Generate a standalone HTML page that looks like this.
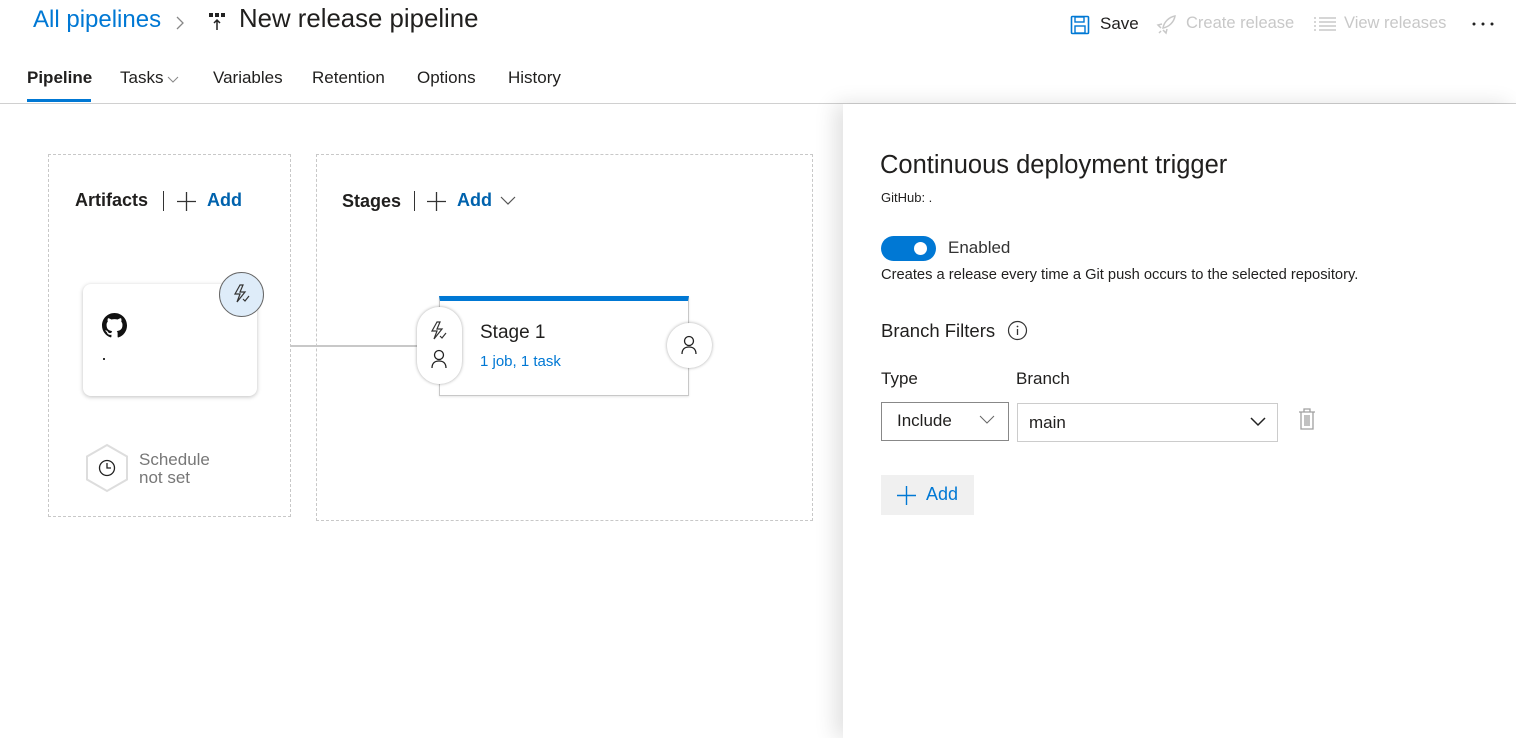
<!DOCTYPE html>
<html><head><style>
*{box-sizing:border-box;margin:0;padding:0}
body{width:1516px;height:738px;overflow:hidden;background:#fff;font-family:"Segoe UI","Liberation Sans",sans-serif;color:#201f1e;position:relative}
.a{position:absolute}
.t{white-space:nowrap}
</style></head><body>
<div class="a t" style="left:33px;top:6px;font-size:24px;color:#0078d4;font-weight:300">All pipelines</div>
<svg class="a" style="left:175px;top:15px" width="10" height="16"><path d="M2 2l6 6-6 6" fill="none" stroke="#888" stroke-width="1.3"/></svg>
<svg class="a" style="left:208px;top:12px" width="20" height="20" viewBox="0 0 20 20"><rect x="1" y="1" width="4" height="4" fill="#222"/><rect x="7" y="1" width="4" height="4" fill="#222"/><rect x="13" y="1" width="4" height="4" fill="#222"/><path d="M9 18V8M6 11l3-3 3 3" stroke="#222" stroke-width="1.5" fill="none"/></svg>
<div class="a t" style="left:239px;top:5px;font-size:25.8px;color:#201f1e">New release pipeline</div>

<svg class="a" style="left:1070px;top:15px" width="20" height="20" viewBox="0 0 20 20"><rect x="1.5" y="1.5" width="17" height="17" rx="1" fill="none" stroke="#0078d4" stroke-width="1.6"/><rect x="5" y="2" width="9" height="5" fill="none" stroke="#0078d4" stroke-width="1.4"/><rect x="5" y="11" width="10" height="7" fill="none" stroke="#0078d4" stroke-width="1.4"/></svg>
<div class="a t" style="left:1100px;top:14px;font-size:17px">Save</div>
<svg class="a" style="left:1155px;top:14px" width="22" height="22" viewBox="0 0 22 22"><path d="M8 14C9 8 14 3 20 2c-1 6-6 11-12 12zM7 10l-4 1 3 3M12 15l-1 4-3-3M4 19l2-2" stroke="#c8c8c8" stroke-width="1.5" fill="none"/></svg>
<div class="a t" style="left:1186px;top:14px;font-size:16.5px;color:#c8c8c8">Create release</div>
<svg class="a" style="left:1314px;top:16px" width="22" height="16"><path d="M0 2h2M5 2h17M0 6h2M5 6h17M0 10h2M5 10h17M0 14h2M5 14h17" stroke="#c8c8c8" stroke-width="1.5"/></svg>
<div class="a t" style="left:1344px;top:14px;font-size:16.5px;color:#c8c8c8">View releases</div>
<svg class="a" style="left:1472px;top:22px" width="24" height="4"><circle cx="2" cy="2" r="1.5" fill="#222"/><circle cx="11" cy="2" r="1.5" fill="#222"/><circle cx="20" cy="2" r="1.5" fill="#222"/></svg>

<div class="a t" style="left:27px;top:68px;font-size:17px;font-weight:600">Pipeline</div>
<div class="a" style="left:27px;top:99px;width:64px;height:3px;background:#0078d4"></div>
<div class="a t" style="left:120px;top:68px;font-size:17px">Tasks</div>
<svg class="a" style="left:167px;top:76px" width="12" height="7"><path d="M1 1l5 5 5-5" fill="none" stroke="#888" stroke-width="1"/></svg>
<div class="a t" style="left:213px;top:68px;font-size:17px">Variables</div>
<div class="a t" style="left:312px;top:68px;font-size:17px">Retention</div>
<div class="a t" style="left:417px;top:68px;font-size:17px">Options</div>
<div class="a t" style="left:508px;top:68px;font-size:17px">History</div>
<div class="a" style="left:0;top:103px;width:1516px;height:1px;background:#d0d0d0"></div>

<div class="a" style="left:48px;top:154px;width:243px;height:363px;border:1px dashed #c8c8c8"></div>
<div class="a" style="left:316px;top:154px;width:497px;height:367px;border:1px dashed #c8c8c8"></div>
<div class="a t" style="left:75px;top:190px;font-size:18px;font-weight:600">Artifacts</div>
<div class="a" style="left:163px;top:191px;width:1px;height:20px;background:#333"></div>
<svg class="a" style="left:177px;top:192px" width="19" height="19"><path d="M9.5 0v19M0 9.5h19" stroke="#333" stroke-width="1.3"/></svg>
<div class="a t" style="left:207px;top:190px;font-size:18px;font-weight:600;color:#0062ad">Add</div>
<div class="a t" style="left:342px;top:191px;font-size:18px;font-weight:600">Stages</div>
<div class="a" style="left:414px;top:191px;width:1px;height:20px;background:#333"></div>
<svg class="a" style="left:427px;top:192px" width="19" height="19"><path d="M9.5 0v19M0 9.5h19" stroke="#333" stroke-width="1.3"/></svg>
<div class="a t" style="left:457px;top:190px;font-size:18px;font-weight:600;color:#0062ad">Add</div>
<svg class="a" style="left:500px;top:196px" width="16" height="9"><path d="M1 1l7 7 7-7" fill="none" stroke="#555" stroke-width="1.2"/></svg>

<div class="a" style="left:83px;top:284px;width:174px;height:112px;border-radius:8px;background:#fff;box-shadow:0 1px 4px rgba(0,0,0,.25)"></div>
<svg class="a" style="left:102px;top:313px" width="25" height="25" viewBox="0 0 16 16"><path fill="#111" d="M8 0C3.58 0 0 3.58 0 8c0 3.54 2.290 6.53 5.47 7.59.4.07.55-.17.55-.38v-1.330c-2.23.48-2.7-1.070-2.7-1.070-.36-.92-.89-1.170-.89-1.170-.73-.5.06-.49.06-.49.8.06 1.230.83 1.230.83.71 1.230 1.870.87 2.330.66.07-.52.28-.87.5-1.070-1.780-.2-3.640-.89-3.640-3.950 0-.87.31-1.590.82-2.150-.08-.2-.36-1.020.08-2.120 0 0 .67-.21 2.2.82a7.6 7.6 0 014 0c1.530-1.040 2.2-.82 2.2-.82.44 1.1.16 1.920.08 2.120.51.56.82 1.270.82 2.150 0 3.070-1.870 3.750-3.650 3.950.29.25.54.73.54 1.480v2.2c0 .21.15.46.55.38A8.010 8.010 0 0016 8c0-4.420-3.580-8-8-8z"/></svg>
<div class="a" style="left:103px;top:358px;width:2px;height:2px;background:#333"></div>
<div class="a" style="left:219px;top:272px;width:45px;height:45px;border-radius:50%;background:#deecf9;border:1px solid #666"></div>
<svg class="a" style="left:231px;top:283px" width="22" height="22" viewBox="0 0 22 22"><path d="M9 2L4 11h5l-3 8 8-10h-5l3-7z" fill="none" stroke="#333" stroke-width="1.2"/><path d="M12 16l2 2 4-5" fill="none" stroke="#333" stroke-width="1.2"/></svg>

<div class="a" style="left:291px;top:345px;width:130px;height:2px;background:#c8c8c8"></div>

<div class="a" style="left:439px;top:296px;width:250px;height:100px;background:#fff;border:1px solid #c8c8c8;border-top:5px solid #0078d4;box-shadow:0 1px 2px rgba(0,0,0,.1)"></div>
<div class="a" style="left:417px;top:307px;width:45px;height:77px;border-radius:23px;background:#fff;box-shadow:0 0 3px rgba(0,0,0,.35)"></div>
<svg class="a" style="left:428px;top:320px" width="22" height="22" viewBox="0 0 22 22"><path d="M9 2L4 11h5l-3 8 8-10h-5l3-7z" fill="none" stroke="#333" stroke-width="1.2"/><path d="M12 16l2 2 4-5" fill="none" stroke="#333" stroke-width="1.2"/></svg>
<svg class="a" style="left:430px;top:349px" width="18" height="20" viewBox="0 0 18 20"><circle cx="9" cy="6" r="4.5" fill="none" stroke="#222" stroke-width="1.3"/><path d="M2 19c0-5 3-7 7-7s7 2 7 7" fill="none" stroke="#222" stroke-width="1.3"/></svg>
<div class="a t" style="left:480px;top:322px;font-size:19px">Stage 1</div>
<div class="a t" style="left:480px;top:353px;font-size:15px;color:#0078d4">1 job, 1 task</div>
<div class="a" style="left:667px;top:323px;width:45px;height:45px;border-radius:50%;background:#fff;box-shadow:0 0 3px rgba(0,0,0,.35)"></div>
<svg class="a" style="left:680px;top:335px" width="18" height="20" viewBox="0 0 18 20"><circle cx="9" cy="6" r="4.5" fill="none" stroke="#222" stroke-width="1.3"/><path d="M2 19c0-5 3-7 7-7s7 2 7 7" fill="none" stroke="#222" stroke-width="1.3"/></svg>

<svg class="a" style="left:84px;top:443px" width="46" height="50" viewBox="0 0 46 50"><path d="M23 2L43 13.5v23L23 48 3 36.5v-23z" fill="#fff" stroke="#ddd" stroke-width="2"/><circle cx="23" cy="25" r="7.5" fill="none" stroke="#222" stroke-width="1.3"/><path d="M23 20v5h4" fill="none" stroke="#222" stroke-width="1.3"/></svg>
<div class="a" style="left:139px;top:451px;font-size:17px;line-height:18px;color:#777">Schedule<br>not set</div>

<div class="a" style="left:843px;top:104px;width:673px;height:634px;background:#fff;box-shadow:-8px 0 20px rgba(0,0,0,.12)"></div>
<div class="a t" style="left:880px;top:151px;font-size:25.5px;color:#201f1e">Continuous deployment trigger</div>
<div class="a t" style="left:881px;top:190px;font-size:13px">GitHub: .</div>
<div class="a" style="left:881px;top:236px;width:55px;height:25px;border-radius:13px;background:#0078d4"></div>
<div class="a" style="left:914px;top:242px;width:13px;height:13px;border-radius:50%;background:#fff"></div>
<div class="a t" style="left:948px;top:238px;font-size:17px;color:#333">Enabled</div>
<div class="a t" style="left:881px;top:267px;font-size:14.7px">Creates a release every time a Git push occurs to the selected repository.</div>
<div class="a t" style="left:881px;top:320px;font-size:18.5px">Branch Filters</div>
<svg class="a" style="left:1007px;top:320px" width="21" height="21"><circle cx="10.5" cy="10.5" r="9" fill="none" stroke="#333" stroke-width="1.2"/><path d="M10.5 9v6" stroke="#333" stroke-width="1.3"/><circle cx="10.5" cy="6.5" r="0.9" fill="#333"/></svg>
<div class="a t" style="left:881px;top:369px;font-size:17px">Type</div>
<div class="a t" style="left:1016px;top:369px;font-size:17px">Branch</div>
<div class="a" style="left:881px;top:402px;width:128px;height:39px;border:1px solid #888"></div>
<div class="a t" style="left:897px;top:411px;font-size:17px">Include</div>
<svg class="a" style="left:979px;top:415px" width="16" height="10"><path d="M1 1l7 7 7-7" fill="none" stroke="#666" stroke-width="1"/></svg>
<div class="a" style="left:1017px;top:403px;width:261px;height:39px;border:1px solid #ccc"></div>
<div class="a t" style="left:1029px;top:413px;font-size:17px">main</div>
<svg class="a" style="left:1250px;top:417px" width="16" height="10"><path d="M1 1l7 7 7-7" fill="none" stroke="#222" stroke-width="1.5"/></svg>
<svg class="a" style="left:1298px;top:408px" width="18" height="22" viewBox="0 0 18 22"><path d="M1 4h16M6 4V1h6v3M3 4v17h12V4M7 7v11M9 7v11M11 7v11" fill="none" stroke="#a0a0a0" stroke-width="1.3"/></svg>
<div class="a" style="left:881px;top:475px;width:93px;height:40px;background:#f0f0f0"></div>
<svg class="a" style="left:897px;top:486px" width="19" height="19"><path d="M9.5 0v19M0 9.5h19" stroke="#0078d4" stroke-width="1.4"/></svg>
<div class="a t" style="left:926px;top:484px;font-size:18px;color:#0078d4">Add</div>
</body></html>
